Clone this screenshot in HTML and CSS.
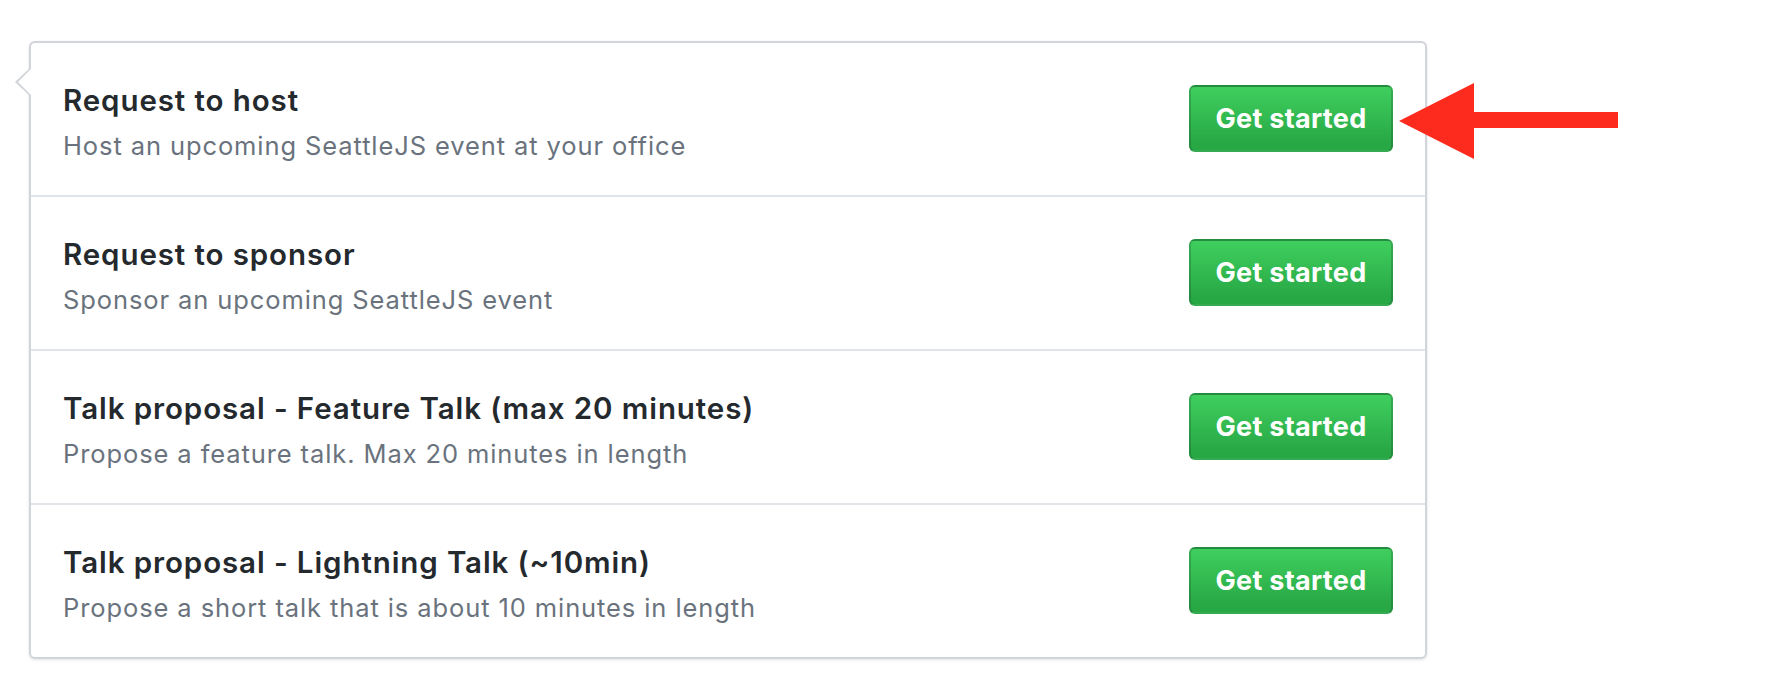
FILE: index.html
```html
<!DOCTYPE html>
<html lang="en">
<head>
<meta charset="utf-8">
<title>Contribute</title>
<link rel="stylesheet" href="styles.css">
</head>
<body>
<div class="page">
  <div class="popover">
    <div class="row">
      <div class="text">
        <div class="title">Request to host</div>
        <div class="desc">Host an upcoming SeattleJS event at your office</div>
      </div>
      <a class="btn">Get started</a>
    </div>
    <div class="row">
      <div class="text">
        <div class="title">Request to sponsor</div>
        <div class="desc">Sponsor an upcoming SeattleJS event</div>
      </div>
      <a class="btn">Get started</a>
    </div>
    <div class="row">
      <div class="text">
        <div class="title">Talk proposal - Feature Talk (max 20 minutes)</div>
        <div class="desc">Propose a feature talk. Max 20 minutes in length</div>
      </div>
      <a class="btn">Get started</a>
    </div>
    <div class="row">
      <div class="text">
        <div class="title">Talk proposal - Lightning Talk (~10min)</div>
        <div class="desc">Propose a short talk that is about 10 minutes in length</div>
      </div>
      <a class="btn">Get started</a>
    </div>
  </div>
  <svg class="arrow" width="222" height="76" viewBox="0 0 222 76" aria-hidden="true">
    <polygon points="0,38 75,0 75,29 219,29 219,45 75,45 75,76" fill="#fd2b1e"/>
  </svg>
</div>
</body>
</html>
```

FILE: styles.css
```css
html, body {
  margin: 0;
  padding: 0;
  background: #ffffff;
}

.page {
  position: relative;
  width: 1784px;
  height: 686px;
  padding: 41px 0 0 29px;
  box-sizing: border-box;
  font-family: Inter, "Liberation Sans", Arial, sans-serif;
}

.popover {
  position: relative;
  width: 1398px;
  box-sizing: border-box;
  border: 2px solid #d1d5da;
  border-radius: 6px;
  background: #fff;
  box-shadow: 0 1px 3px rgba(27, 31, 35, 0.12);
}

.popover::before,
.popover::after {
  content: "";
  position: absolute;
  top: 24px;
  width: 0;
  height: 0;
  border-style: solid;
}

.popover::before {
  left: -16px;
  border-width: 15px 16px 15px 0;
  border-color: transparent #d1d5da transparent transparent;
}

.popover::after {
  left: -13px;
  top: 25px;
  border-width: 14px 14px 14px 0;
  border-color: transparent #ffffff transparent transparent;
}

.row {
  display: flex;
  align-items: center;
  justify-content: space-between;
  padding: 30px 32px 30.5px 32px;
  border-top: 2px solid #e1e4e8;
}

.row:first-child {
  border-top: 0;
}

.text {
  padding-top: 6px;
}

.title {
  font-size: 29.5px;
  line-height: 43px;
  font-weight: 600;
  letter-spacing: 0.9px;
  color: #24292e;
}

.desc {
  margin-top: 5px;
  font-size: 25.5px;
  line-height: 37.5px;
  letter-spacing: 0.9px;
  color: #6a737d;
}

.btn {
  display: flex;
  align-items: center;
  justify-content: center;
  width: 204px;
  height: 67px;
  box-sizing: border-box;
  border: 2px solid rgba(27, 31, 35, 0.2);
  border-radius: 6px;
  background-image: linear-gradient(180deg, #3fcf5e 0%, #28a745 90%);
  color: #ffffff;
  font-size: 27px;
  font-weight: 700;
  letter-spacing: 0.3px;
  cursor: pointer;
}

.arrow {
  position: absolute;
  left: 1399px;
  top: 83px;
}
```
